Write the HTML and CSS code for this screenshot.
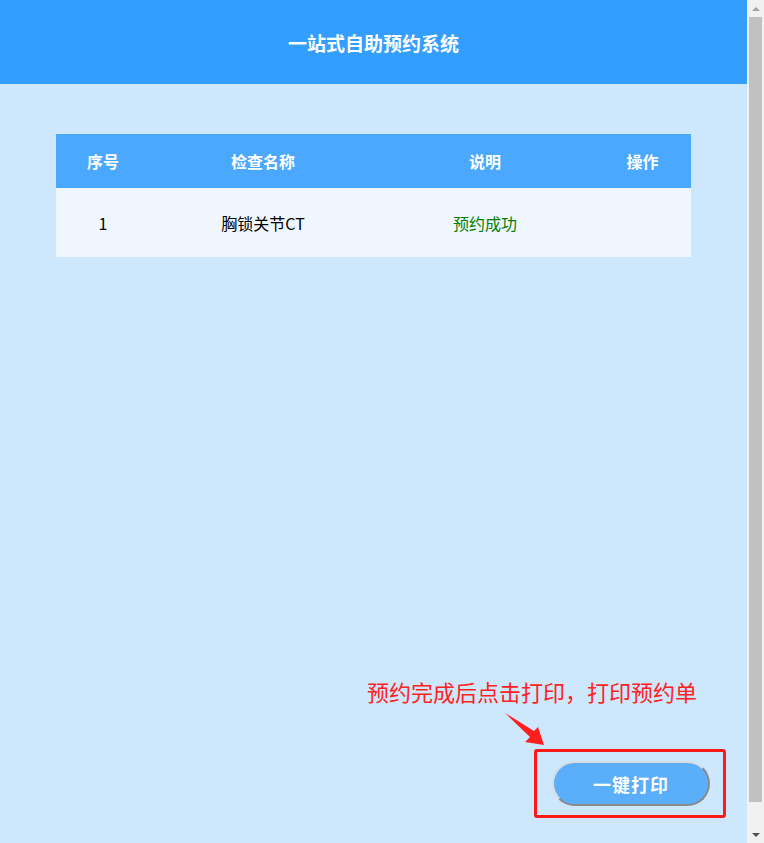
FILE: index.html
```html
<!DOCTYPE html>
<html lang="zh-CN">
<head>
<meta charset="utf-8">
<title>一站式自助预约系统</title>
<link rel="stylesheet" href="styles.css">
</head>
<body>
<div class="page">
  <main class="main">
    <header class="topbar">一站式自助预约系统</header>
    <section class="content">
      <table class="grid">
        <thead>
          <tr>
            <th class="c1">序号</th>
            <th class="c2">检查名称</th>
            <th class="c3">说明</th>
            <th class="c4">操作</th>
          </tr>
        </thead>
        <tbody>
          <tr>
            <td>1</td>
            <td>胸锁关节CT</td>
            <td class="ok">预约成功</td>
            <td></td>
          </tr>
        </tbody>
      </table>
    </section>
    <footer class="footer">
      <div class="hint">
        <div class="hint-text">预约完成后点击打印，打印预约单</div>
        <svg class="arrow" width="42" height="46" viewBox="0 0 42 46">
          <polygon points="0,10 29,28 33,24 39,42 20,39 25,34" fill="#ff1f1f"/>
        </svg>
        <div class="frame">
          <button class="print-btn" type="button">一键打印</button>
        </div>
      </div>
    </footer>
  </main>
  <div class="scrollbar">
    <div class="sb-arrow"><span class="tri-up"></span></div>
    <div class="sb-track"><div class="sb-thumb"></div></div>
    <div class="sb-arrow"><span class="tri-down"></span></div>
  </div>
</div>
</body>
</html>
```
FILE: styles.css
```css
html, body {
  margin: 0;
  padding: 0;
}
body {
  font-family: "Noto Sans CJK SC", "Noto Sans", sans-serif;
  background: #cde8fc;
}
.page {
  display: flex;
  width: 764px;
  height: 843px;
  overflow: hidden;
}
.main {
  flex: 0 0 747px;
  display: flex;
  flex-direction: column;
  background: #cde8fc;
}
.topbar {
  height: 84px;
  background: #339efe;
  color: #fff;
  font-size: 19px;
  font-weight: bold;
  display: flex;
  align-items: center;
  justify-content: center;
}
.content {
  padding: 50px 56px 0 56px;
  flex: 1;
}
.grid {
  width: 635px;
  border-collapse: collapse;
  table-layout: fixed;
  font-size: 16px;
}
.grid th {
  background: #4aa8fe;
  color: #fff;
  font-weight: bold;
  height: 54px;
  padding: 0;
  text-align: center;
}
.grid td {
  background: #f0f6fd;
  color: #000;
  height: 69px;
  padding: 0;
  text-align: center;
}
.c1 { width: 94px; }
.c2 { width: 226px; }
.c3 { width: 218px; }
.c4 { width: 97px; }
.grid td.ok { color: #008000; }
.footer {
  display: flex;
  justify-content: flex-end;
  padding: 0 21px 25px 0;
}
.hint {
  width: 359px;
  display: flex;
  flex-direction: column;
}
.hint-text {
  color: #ff2222;
  font-size: 22px;
  line-height: 24px;
  height: 24px;
  white-space: nowrap;
}
.arrow {
  display: block;
  margin-left: 138px;
}
.frame {
  margin-left: 167px;
  width: 192px;
  height: 69px;
  border: 3px solid #ff1a1a;
  border-radius: 3px;
  padding: 9px 0 0 15px;
  box-sizing: border-box;
  display: flex;
  align-items: flex-start;
}
.print-btn {
  width: 158px;
  height: 45px;
  border-radius: 23px;
  background: #5aaefa;
  color: #fff;
  font-family: "Noto Sans CJK SC", sans-serif;
  font-size: 18px;
  font-weight: bold;
  border: 2px solid;
  border-color: #d6dde4 #8a8a8a #8a8a8a #d6dde4;
  padding: 0;
  letter-spacing: 1px;
}
.scrollbar {
  flex: 0 0 17px;
  background: #f1f1f1;
  display: flex;
  flex-direction: column;
}
.sb-arrow {
  height: 17px;
  display: flex;
  align-items: center;
  justify-content: center;
}
.tri-up {
  width: 0;
  height: 0;
  border-left: 4px solid transparent;
  border-right: 4px solid transparent;
  border-bottom: 4px solid #a3a3a3;
}
.tri-down {
  width: 0;
  height: 0;
  border-left: 4px solid transparent;
  border-right: 4px solid transparent;
  border-top: 4px solid #505050;
}
.sb-track {
  flex: 1;
  display: flex;
  flex-direction: column;
  padding: 0 2px 0 2px;
}
.sb-thumb {
  height: 785px;
  background: #c1c1c1;
}
```
